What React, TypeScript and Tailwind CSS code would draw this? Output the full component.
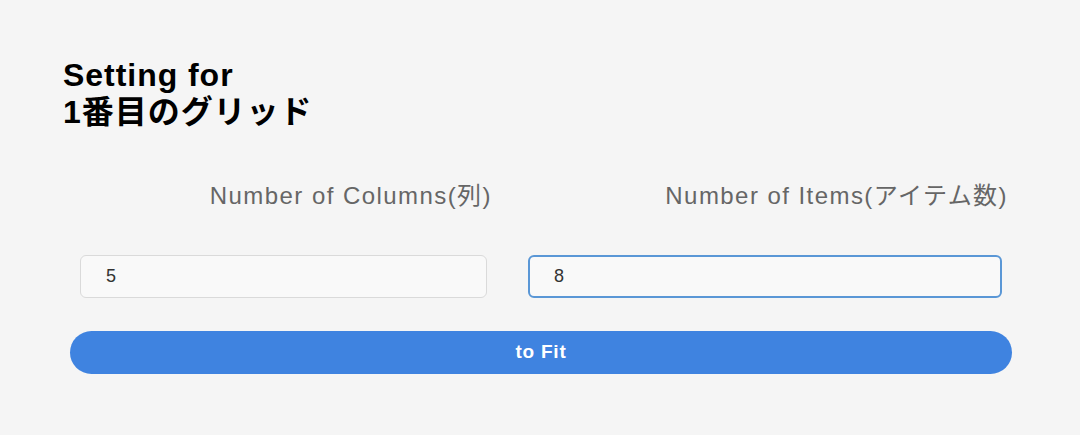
import React from 'react';

const font = { fontFamily: '"Liberation Sans", "Noto Sans CJK JP", sans-serif' };

const App: React.FC = () => {
  return (
    <div className="min-h-[435px] w-[1080px] bg-[#f5f5f5] pt-[57px]" style={font}>
      <h1 className="ml-[63px] text-[32px] leading-[37px] font-bold text-black tracking-[0.03em]">
        Setting for
        <br />
        1番目のグリッド
      </h1>

      <div className="mt-[50px] ml-[80px] flex gap-[36px]">
        <div className="w-[412px]">
          <label className="block text-right text-[24px] leading-[30px] text-[#666] tracking-[0.06em]">
            Number of Columns(列)
          </label>
          <input
            defaultValue="5"
            className="mt-[44px] h-[43px] w-[407px] rounded-[6px] border-[1.5px] border-[#dadada] bg-[#f9f9f9] pl-[25px] text-[18px] text-[#333] outline-none"
          />
        </div>
        <div className="w-[480px]">
          <label className="block text-right text-[24px] leading-[30px] text-[#666] tracking-[0.06em]">
            Number of Items(アイテム数)
          </label>
          <input
            defaultValue="8"
            className="mt-[44px] h-[43px] w-[474px] rounded-[6px] border-2 border-[#5a97d6] bg-[#f9f9f9] pl-[24px] text-[18px] text-[#333] outline-none"
          />
        </div>
      </div>

      <button className="mt-[33px] ml-[70px] h-[43px] w-[942px] rounded-full bg-[#3f83e0] text-[19px] font-bold text-white tracking-[0.04em]">
        to Fit
      </button>
    </div>
  );
};

export default App;
